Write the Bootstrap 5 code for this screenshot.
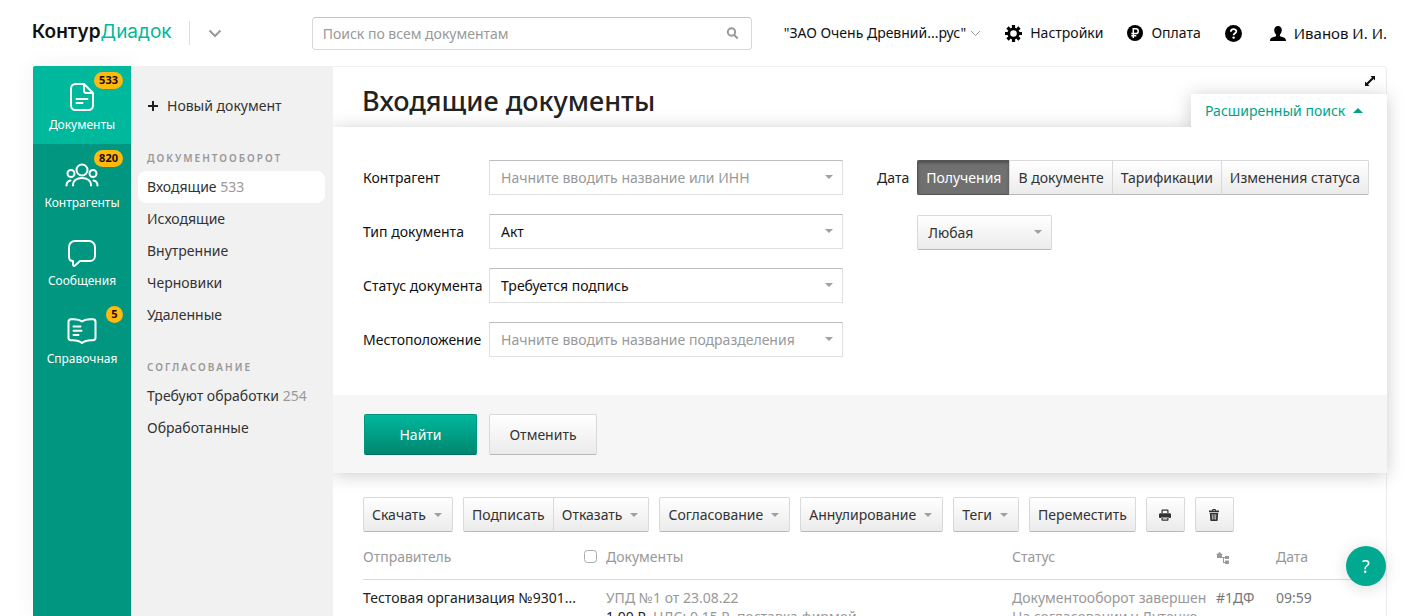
<!DOCTYPE html>
<html lang="ru">
<head>
<meta charset="utf-8">
<meta name="viewport" content="width=device-width, initial-scale=1">
<title>Контур.Диадок — Входящие документы</title>
<link href="https://cdn.jsdelivr.net/npm/bootstrap@5.3.0/dist/css/bootstrap.min.css" rel="stylesheet">
<style>
  :root { --green: #00967f; --green-light: #00b89c; --muted: #999; --line: #dcdcdc; }
  body { font-family: "Noto Sans", "Open Sans", sans-serif; font-size: 14px; line-height: 20px; color: #222; background: #fff; }
  a { color: inherit; text-decoration: none; }
  .topbar { height: 66px; padding: 0 31px 0 32px; }
  .brand { font-family: Inter, "Noto Sans", sans-serif; font-size: 19px; font-weight: 600; color: #111; line-height: 24px; padding-bottom: 2px; }
  .brand span { font-weight: 400; color: var(--green-light); }
  .brand-rule { width: 1px; height: 24px; background: #ddd; margin: 0 18px 0 17px; }
  .search-box { width: 440px; height: 33px; margin-left: 90px; }
  .search-box input { border: 1px solid #d8d8d8; border-top-color: #c4c4c4; border-radius: 4px; height: 33px; padding: 0 36px 0 10px; font-size: 14px; }
  .search-box svg { position: absolute; right: 13px; top: 10px; }
  input::placeholder { color: var(--muted) !important; opacity: 1; }
  .topnav a { color: #111; white-space: nowrap; }
  .user-name { font-size: 15px; }

  .shell { margin: 0 31px 0 33px; min-height: 0; }
  .rail { width: 98px; background: var(--green); border-top-left-radius: 3px; z-index: 2; box-shadow: 0 0 24px rgba(0,0,0,.06); }
  .rail a { height: 78px; padding-top: 15px; color: #fff; font-size: 12px; line-height: 16px; }
  .rail a.current { background: var(--green-light); border-top-left-radius: 3px; }
  .rail svg { fill: none; stroke: #fff; stroke-width: 2; stroke-linecap: round; stroke-linejoin: round; }
  .count { position: absolute; right: 8px; top: 6px; min-width: 17px; height: 17px; border-radius: 9px; padding: 0 5px; background: #ffb90f; color: #1c0d00; font-size: 11px; line-height: 16px; font-weight: 700; }

  .sidebar { width: 202px; background: #f1f1f1; z-index: 2; padding: 24px 8px 0 7px; color: #333; }
  .sidebar a { height: 32px; line-height: 32px; padding: 0 9px; border-radius: 8px; }
  .sidebar a.current { background: #fff; }
  .sidebar h2 { font-size: 10px; line-height: 16px; font-weight: 600; letter-spacing: 2px; color: var(--muted); padding-left: 9px; margin: 0 0 5px; }
  .num { color: var(--muted); }

  .content { min-width: 0; border-top: 1px solid #f0f0f0; border-right: 1px solid #ececec; border-top-right-radius: 4px; }
  .content-head { height: 60px; padding: 0 10px 0 29px; }
  .content-head h1 { font-size: 27px; line-height: 32px; font-weight: 500; margin: 18px 0 0; }
  .icon-btn { border: 0; background: none; padding: 0; line-height: 0; }

  .filter { filter: drop-shadow(0 2px 9px rgba(0,0,0,.2)); margin-right: -1px; }
  .filter-toggle { position: absolute; right: 0; bottom: 100%; width: 196px; height: 33px; border: 0; background: #fff; color: #00a388; padding: 0 0 0 14px; }
  .filter-body { background: #fff; padding: 33px 18px 38px 30px; }
  .filter-grid { display: grid; grid-template-columns: 126px minmax(0, 354px); row-gap: 19px; align-items: center; color: #111; }
  .combo { height: 35px; border: 1px solid #e0e0e0; border-top-color: #bdbdbd; border-radius: 0; padding: 0 32px 0 11px; font-size: 14px; color: #111; }
  .combo.form-select { background-image: none; }
  .caret { width: 0; height: 0; border: 4px solid transparent; border-top-color: #a0a0a0; border-bottom: 0; }
  .caret-up { border: 5px solid transparent; border-bottom-color: #00a388; border-top: 0; }
  .combo-wrap .caret { position: absolute; right: 10px; top: 15px; pointer-events: none; }
  .filter-foot { background: #f6f6f6; padding: 19px 31px 18px; gap: 12px; }

  .gbtn { height: 35px; padding: 0 8px; font-size: 14px; line-height: 20px; color: #333; white-space: nowrap; border: 1px solid #d9d9d9; border-bottom-color: #b9b9b9; border-radius: 2px; background: linear-gradient(#fff, #ebebeb); display: inline-flex; align-items: center; }
  .gbtn:hover { background: linear-gradient(#fff, #e4e4e4); border-color: #c4c4c4; }
  .gbtn.pressed { background: #707070; border-color: #555; color: #fff; box-shadow: inset 0 2px 3px rgba(0,0,0,.3); }
  .gbtn .caret { margin: 0 2px 0 8px; }
  .gbtn-icon { width: 39px; justify-content: center; padding: 0; }
  .joined .gbtn:not(:first-child) { margin-left: -1px; border-top-left-radius: 0; border-bottom-left-radius: 0; }
  .joined .gbtn:not(:last-child) { border-top-right-radius: 0; border-bottom-right-radius: 0; border-right-color: #c4c4c4; }
  .period { width: 135px; padding: 0 32px 0 10px; }
  .gbtn-lg { height: 41px; width: 108px; justify-content: center; }
  .gbtn-find { width: 113px; color: #fff; border-color: #00957c; border-bottom-color: #00705e; background: linear-gradient(#00b89c, #008670); }
  .gbtn-find:hover { background: linear-gradient(#00b89c, #007a66); border-color: #007a66; }

  .toolbar { padding: 24px 30px 0; gap: 10px; }
  .doc-list { padding: 10px 18px 0 30px; }
  .doc-table { table-layout: fixed; width: 100%; color: var(--muted); }
  .doc-table th { font-weight: 400; height: 37px; padding: 0 0 7px; vertical-align: middle; border-bottom: 1px solid var(--line); }
  .doc-table td { padding: 8px 0; vertical-align: top; line-height: 19px; white-space: nowrap; }
  .doc-table input { width: 13px; height: 13px; margin: 0; border: 1px solid #aaa; border-radius: 2px; display: block; }
  .ink { color: #222; }
  .dim { color: #777; }
  .help-fab { position: fixed; right: 32px; bottom: 30px; width: 40px; height: 40px; border: 0; border-radius: 50%; background: #00a990; color: #fff; font-size: 18px; box-shadow: 0 2px 16px rgba(0,0,0,.15); z-index: 5; }
</style>
</head>
<body>
<div class="d-flex flex-column vh-100 overflow-hidden">

  <header class="topbar d-flex align-items-center flex-shrink-0">
    <a href="#" class="brand">Контур<span>Диадок</span></a>
    <div class="brand-rule"></div>
    <button class="icon-btn" aria-label="Сервисы"><svg width="14" height="9" viewBox="0 0 14 9" fill="none" stroke="#999" stroke-width="2"><path d="M1.5 1.5 7 7l5.500-5.500"/></svg></button>
    <form class="search-box position-relative" role="search">
      <input class="form-control shadow-none" type="search" aria-label="Поиск" placeholder="Поиск по всем документам">
      <svg width="13" height="13" viewBox="0 0 13 13" fill="none" stroke="#999" stroke-width="2"><circle cx="5.500" cy="5" r="3.700"/><path d="m8.200 8 3.500 3.500"/></svg>
    </form>
    <nav class="topnav d-flex align-items-center ms-auto">
      <a href="#" class="d-flex align-items-center me-4">"ЗАО Очень Древний...рус"<svg class="ms-1" width="11" height="7" viewBox="0 0 11 7" fill="none" stroke="#999"><path d="m1 1 4.500 4.500L10 1"/></svg></a>
      <a href="#" class="d-flex align-items-center me-4"><svg class="me-2" width="17" height="17" viewBox="0 0 17 17"><g fill="none" stroke="#000"><circle cx="8.500" cy="8.500" r="4.700" stroke-width="2.800"/><path d="M8.500 0v3M8.500 14v3M0 8.500h3M14 8.500h3M2.500 2.500l2.100 2.100M12.400 12.400l2.100 2.100M2.500 14.500l2.100-2.100M12.400 4.600l2.100-2.100" stroke-width="3.200"/></g></svg>Настройки</a>
      <a href="#" class="d-flex align-items-center me-4"><svg class="me-2" width="16" height="16" viewBox="0 0 16 16"><circle cx="8" cy="8" r="8"/><path d="M6.300 13V3.800h2.600a2.300 2.300 0 0 1 0 4.700H4.300M4.300 10.800h5" fill="none" stroke="#fff" stroke-width="1.500"/></svg>Оплата</a>
      <a href="#" class="d-flex pe-4" aria-label="Помощь"><svg width="17" height="17" viewBox="0 0 17 17"><circle cx="8.500" cy="8.500" r="8.500"/><path d="M5.800 6.700c0-3.500 5.600-3.300 5.500-.3 0 1.900-2.700 1.900-2.700 3.800" fill="none" stroke="#fff" stroke-width="1.800"/><circle cx="8.600" cy="12.600" r="1.200" fill="#fff"/></svg></a>
      <a href="#" class="d-flex align-items-center user-name ms-1"><svg class="me-2" width="16" height="15" viewBox="0 0 16 15"><path d="M8 0c2.400 0 3.800 1.700 3.800 4 0 1.900-.7 3.400-1.800 4.400-.4 1.400 0 1.800 1.500 2.300 2.700.8 4.500 1.300 4.500 4.300H0c0-3 1.800-3.500 4.500-4.300C6 10.200 6.400 9.800 6 8.400 4.900 7.400 4.200 5.900 4.200 4 4.200 1.700 5.600 0 8 0Z"/></svg>Иванов И. И.</a>
    </nav>
  </header>

  <div class="shell d-flex flex-grow-1">
    <nav class="rail position-relative flex-shrink-0" aria-label="Разделы">
      <a href="#" class="current position-relative d-flex flex-column align-items-center">
        <svg width="32" height="32" viewBox="0 0 32 32"><path d="M18 3H9.500A4.500 4.500 0 0 0 5 7.500v17A4.500 4.500 0 0 0 9.500 29h13a4.500 4.500 0 0 0 4.500-4.500V12L18 3v6.500a2.500 2.500 0 0 0 2.500 2.500H27M10.500 18h11M10.500 22h6"/></svg>
        <span class="mt-1">Документы</span><span class="count text-center">533</span>
      </a>
      <a href="#" class="position-relative d-flex flex-column align-items-center">
        <svg width="34" height="32" viewBox="0 0 34 32"><circle cx="17" cy="11" r="5.500"/><circle cx="6" cy="14.500" r="3.500"/><circle cx="28" cy="14.500" r="3.500"/><path d="M8 26.500c0-5 4-7.500 9-7.500s9 2.500 9 7.500M1.500 26.500c0-2.500 1.500-4.500 4-5M32.500 26.500c0-2.500-1.500-4.500-4-5"/></svg>
        <span class="mt-1">Контрагенты</span><span class="count text-center">820</span>
      </a>
      <a href="#" class="position-relative d-flex flex-column align-items-center">
        <svg width="32" height="32" viewBox="0 0 32 32"><path d="M9 4h14a6 6 0 0 1 6 6v9a5 5 0 0 1-5 5H14l-5 4.500c-1 .8-2 .3-2-1V24c-2.500 0-4-2-4-4.500V10a6 6 0 0 1 6-6Z"/></svg>
        <span class="mt-1">Сообщения</span>
      </a>
      <a href="#" class="position-relative d-flex flex-column align-items-center">
        <svg width="32" height="32" viewBox="0 0 32 32"><path d="M16 6.500c3-2.500 7-2.500 11-2.200 1.500.1 2.500 1 2.500 2.500v16c0 1.500-1 2.400-2.500 2.400-4-.2-8 0-11 2.800-3-2.800-7-3-11-2.800-1.500 0-2.500-.9-2.500-2.400v-16c0-1.500 1-2.400 2.500-2.500 4-.3 8-.3 11 2.200ZM7.500 11.500h7M7.500 15.800h8M7.500 20h5"/></svg>
        <span class="mt-1">Справочная</span><span class="count text-center">5</span>
      </a>
    </nav>

    <aside class="sidebar position-relative flex-shrink-0 d-flex flex-column">
      <a href="#" class="d-flex align-items-center mb-4"><svg class="me-2" width="12" height="12" viewBox="0 0 12 12" stroke="#222" stroke-width="2"><path d="M6 1v10M1 6h10"/></svg>Новый документ</a>
      <h2 class="mt-1">ДОКУМЕНТООБОРОТ</h2>
      <a href="#" class="current">Входящие <span class="num">533</span></a>
      <a href="#">Исходящие</a>
      <a href="#">Внутренние</a>
      <a href="#">Черновики</a>
      <a href="#" class="mb-4">Удаленные</a>
      <h2 class="mt-1">СОГЛАСОВАНИЕ</h2>
      <a href="#">Требуют обработки <span class="num">254</span></a>
      <a href="#">Обработанные</a>
    </aside>

    <main class="content flex-grow-1">
      <div class="content-head d-flex justify-content-between align-items-start">
        <h1>Входящие документы</h1>
        <button class="icon-btn mt-2" aria-label="Развернуть"><svg width="12" height="12" viewBox="0 0 12 12"><path d="M6.500 1H11v4.500L9.500 4 4 9.500 5.500 11H1V6.500L2.500 8 8 2.500Z" fill="#111"/></svg></button>
      </div>

      <form class="filter position-relative">
        <button type="button" class="filter-toggle d-flex align-items-center">Расширенный поиск<span class="caret-up ms-2"></span></button>
        <div class="filter-body d-flex align-items-start justify-content-between">
          <div class="filter-grid">
            <label for="partner">Контрагент</label>
            <div class="combo-wrap position-relative"><input id="partner" class="form-control shadow-none combo" placeholder="Начните вводить название или ИНН"><span class="caret"></span></div>
            <label for="kind">Тип документа</label>
            <div class="combo-wrap position-relative"><select id="kind" class="form-select shadow-none combo"><option>Акт</option></select><span class="caret"></span></div>
            <label for="state">Статус документа</label>
            <div class="combo-wrap position-relative"><select id="state" class="form-select shadow-none combo"><option>Требуется подпись</option></select><span class="caret"></span></div>
            <label for="place">Местоположение</label>
            <div class="combo-wrap position-relative"><input id="place" class="form-control shadow-none combo" placeholder="Начните вводить название подразделения"><span class="caret"></span></div>
          </div>
          <div class="d-flex">
            <label for="period" class="mt-2 me-2">Дата</label>
            <div>
              <div class="joined d-flex mb-3" role="group" aria-label="Дата">
                <button type="button" class="gbtn pressed">Получения</button>
                <button type="button" class="gbtn">В документе</button>
                <button type="button" class="gbtn">Тарификации</button>
                <button type="button" class="gbtn">Изменения статуса</button>
              </div>
              <div class="combo-wrap position-relative d-inline-block mt-1"><select id="period" class="form-select shadow-none gbtn period"><option>Любая</option></select><span class="caret"></span></div>
            </div>
          </div>
        </div>
        <div class="filter-foot d-flex">
          <button type="submit" class="gbtn gbtn-lg gbtn-find">Найти</button>
          <button type="button" class="gbtn gbtn-lg">Отменить</button>
        </div>
      </form>

      <div class="toolbar d-flex">
        <button class="gbtn">Скачать<span class="caret"></span></button>
        <div class="joined d-flex">
          <button class="gbtn">Подписать</button>
          <button class="gbtn">Отказать<span class="caret"></span></button>
        </div>
        <button class="gbtn">Согласование<span class="caret"></span></button>
        <button class="gbtn">Аннулирование<span class="caret"></span></button>
        <button class="gbtn">Теги<span class="caret"></span></button>
        <button class="gbtn">Переместить</button>
        <button class="gbtn gbtn-icon" aria-label="Печать"><svg width="12" height="12" viewBox="0 0 12 12" fill="#333"><path d="M2.500 4V1.500C2.500.7 3 .5 3.500.5h5c.5 0 1 .2 1 1V4H8.300V1.700H3.700V4ZM1.500 4.300h9c1 0 1.500.5 1.500 1.500v2c0 .8-.5 1.200-1.200 1.200H9.700V8H2.300v1H1.200C.5 9 0 8.600 0 7.800v-2c0-1 .5-1.500 1.500-1.500ZM2.500 8.500h7v2.300c0 .5-.3.900-.9.900H3.400c-.6 0-.9-.4-.9-.9Zm1.200.7v1.300h4.600V9.200Z"/></svg></button>
        <button class="gbtn gbtn-icon" aria-label="Удалить"><svg width="10" height="12" viewBox="0 0 10 12" fill="#333"><path d="M3 1.500C3 .5 3.500 0 4.200 0h1.600C6.500 0 7 .5 7 1.500h3v1.700H0V1.500Zm1 0h2V1H4ZM.8 4h8.400l-.5 7c0 .6-.4 1-1 1H2.300c-.6 0-1-.4-1-1Zm2 1.300.2 5.200h.7l-.2-5.200Zm1.900 0v5.200h.7V5.300Zm1.800 0-.2 5.200H7l.2-5.200Z" fill-rule="evenodd"/></svg></button>
      </div>

      <div class="doc-list">
        <table class="doc-table">
          <colgroup><col style="width:221px"><col style="width:22px"><col><col style="width:204px"><col style="width:60px"><col style="width:92px"></colgroup>
          <thead><tr>
            <th scope="col">Отправитель</th>
            <th scope="col"><input type="checkbox" class="form-check-input" aria-label="Выбрать все"></th>
            <th scope="col">Документы</th><th scope="col">Статус</th>
            <th scope="col" aria-label="Подразделение"><svg width="13" height="12" viewBox="0 0 13 12" fill="#999"><path d="M3.500 0 7 3H6v3H1V3H0ZM9 4h4v3H9ZM9 8.500h4V12H9ZM5 6V5h4v1H8v4h1v1H7V6Z"/></svg></th>
            <th scope="col">Дата</th>
          </tr></thead>
          <tbody><tr>
            <td class="ink">Тестовая организация №9301...</td><td></td>
            <td>УПД №1 от 23.08.22<br><span class="ink">1,00 ₽</span>, НДС: 0,15 ₽, поставка фирмой</td>
            <td>Документооборот завершен<br>На согласовании у Дутенко</td>
            <td class="dim">#1ДФ</td><td class="dim">09:59</td>
          </tr></tbody>
        </table>
      </div>
    </main>
  </div>
</div>
<button class="help-fab" aria-label="Справка">?</button>
<script src="https://cdn.jsdelivr.net/npm/bootstrap@5.3.0/dist/js/bootstrap.bundle.min.js"></script>
</body>
</html>
